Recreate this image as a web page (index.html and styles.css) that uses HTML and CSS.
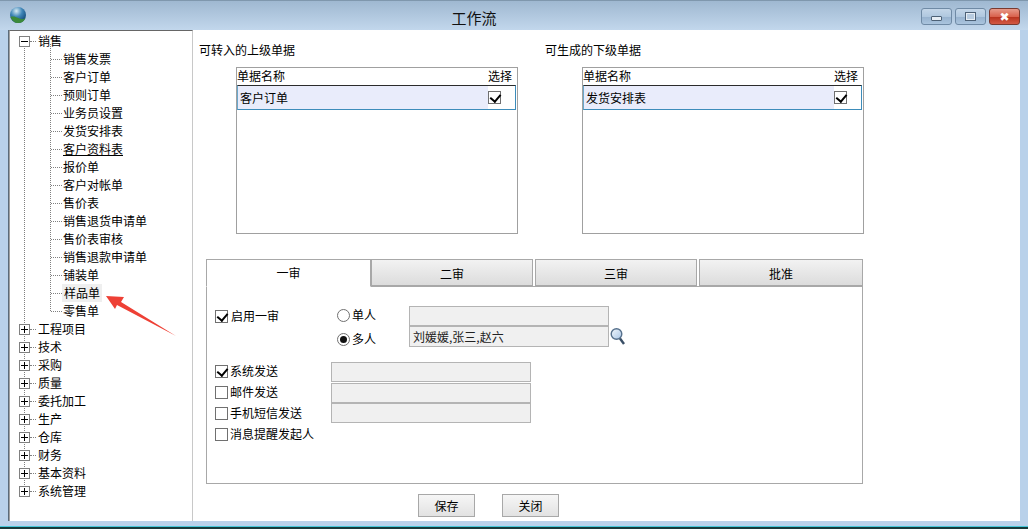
FILE: index.html
```html
<!DOCTYPE html>
<html lang="zh-CN">
<head>
<meta charset="utf-8">
<title>工作流</title>
<link rel="stylesheet" href="styles.css">
</head>
<body>
<div class="window">
  <header class="titlebar">
    <svg class="logo" width="18" height="18" viewBox="0 0 18 18"><defs><radialGradient id="g" cx="0.4" cy="0.25" r="0.8"><stop offset="0" stop-color="#d8ecf5"/><stop offset="0.45" stop-color="#3f86b8"/><stop offset="1" stop-color="#0d3f6e"/></radialGradient></defs><circle cx="9" cy="9" r="8" fill="url(#g)"/><path d="M1.5 11c2 4 4 6 8 6 3 0 6-2 7-5-3 2-5 1-7 0-3-1-5-2-8-1z" fill="#3c8a3a"/></svg>
    <div class="title">工作流</div>
    <div class="controls">
      <div class="ctl"><span class="min-glyph"></span></div>
      <div class="ctl"><span class="max-glyph"></span></div>
      <div class="ctl close"><span class="x-glyph">✖</span></div>
    </div>
  </header>
  <div class="client">
    <nav class="tree">
      <div class="node open"><span class="box minus"></span><span class="label">销售</span></div>
      <ul class="children">
        <li>销售发票</li><li>客户订单</li><li>预则订单</li><li>业务员设置</li><li>发货安排表</li>
        <li><u>客户资料表</u></li><li>报价单</li><li>客户对帐单</li><li>售价表</li><li>销售退货申请单</li>
        <li>售价表审核</li><li>销售退款申请单</li><li>铺装单</li><li><span class="hover">样品单</span></li><li>零售单</li>
      </ul>
      <div class="node"><span class="box"></span><span class="label">工程项目</span></div>
      <div class="node"><span class="box"></span><span class="label">技术</span></div>
      <div class="node"><span class="box"></span><span class="label">采购</span></div>
      <div class="node"><span class="box"></span><span class="label">质量</span></div>
      <div class="node"><span class="box"></span><span class="label">委托加工</span></div>
      <div class="node"><span class="box"></span><span class="label">生产</span></div>
      <div class="node"><span class="box"></span><span class="label">仓库</span></div>
      <div class="node"><span class="box"></span><span class="label">财务</span></div>
      <div class="node"><span class="box"></span><span class="label">基本资料</span></div>
      <div class="node last"><span class="box"></span><span class="label">系统管理</span></div>
      <svg class="arrow" width="72" height="43" viewBox="0 0 72 43"><path d="M0 1 18 2 15 7 70 41 11 10 9 14z" fill="#ee4035"/></svg>
    </nav>
    <main class="main">
      <section class="lists">
        <div class="col">
          <div class="col-title">可转入的上级单据</div>
          <div class="grid">
            <div class="grid-head"><span>单据名称</span><span>选择</span></div>
            <div class="grid-row"><span class="cell">客户订单</span><span class="cell-check"><span class="check on"></span></span></div>
          </div>
        </div>
        <div class="col">
          <div class="col-title">可生成的下级单据</div>
          <div class="grid">
            <div class="grid-head"><span>单据名称</span><span>选择</span></div>
            <div class="grid-row"><span class="cell">发货安排表</span><span class="cell-check"><span class="check on"></span></span></div>
          </div>
        </div>
      </section>
      <section class="tabs">
        <div class="tabbar">
          <div class="tab active">一审</div>
          <div class="tab">二审</div>
          <div class="tab">三审</div>
          <div class="tab">批准</div>
        </div>
        <div class="panel">
          <div class="approver">
            <label class="opt w-enable"><span class="check on"></span>启用一审</label>
            <div class="radios">
              <label class="opt"><span class="radio"></span>单人</label>
              <label class="opt"><span class="radio on"></span>多人</label>
            </div>
            <div class="fields">
              <div class="field"></div>
              <div class="field-row">
                <div class="field"><span class="names">刘媛媛,张三,赵六</span></div>
                <svg class="search" width="16" height="20" viewBox="0 0 16 20"><defs><linearGradient id="lens" x1="0" y1="0" x2="1" y2="1"><stop offset="0" stop-color="#f2f7fc"/><stop offset="1" stop-color="#a9c6e6"/></linearGradient></defs><circle cx="6.5" cy="7" r="5.3" fill="url(#lens)" stroke="#56708c" stroke-width="1.4"/><path d="M10 11.5 14 17" stroke="#3a4f66" stroke-width="2.4"/></svg>
              </div>
            </div>
          </div>
          <div class="sends">
            <div class="send-opts">
              <label class="opt"><span class="check on"></span>系统发送</label>
              <label class="opt"><span class="check"></span>邮件发送</label>
              <label class="opt"><span class="check"></span>手机短信发送</label>
              <label class="opt"><span class="check"></span>消息提醒发起人</label>
            </div>
            <div class="send-fields">
              <div class="field"></div>
              <div class="field"></div>
              <div class="field"></div>
            </div>
          </div>
        </div>
      </section>
      <footer class="actions">
        <button class="btn">保存</button>
        <button class="btn">关闭</button>
      </footer>
    </main>
  </div>
  <div class="edge"></div>
</div>
</body>
</html>
```
FILE: styles.css
```css
* { box-sizing: border-box; }
html, body { margin: 0; padding: 0; }
body {
  width: 1028px;
  height: 529px;
  overflow: hidden;
  font-family: "Noto Sans CJK SC", "Liberation Sans", sans-serif;
  font-size: 12px;
  color: #000;
  background: #fff;
}
.window {
  width: 1028px;
  height: 529px;
  display: flex;
  flex-direction: column;
  background: #b9d1ea;
}
.titlebar {
  height: 30px;
  flex: none;
  position: relative;
  display: flex;
  align-items: center;
  padding: 0 8px 2px 9px;
  background: linear-gradient(#9fb8d1, #c2d7ec);
  border-top: 1px solid #7f97ad;
}
.logo { flex: none; margin-top: 1px; }
.title {
  flex: 1;
  text-align: center;
  font-size: 15px;
  line-height: 20px;
  margin-top: 6px;
  color: #111;
}
.controls { display: flex; gap: 3px; flex: none; margin-top: 4px; }
.ctl {
  width: 31px;
  height: 17px;
  display: flex;
  align-items: center;
  justify-content: center;
  border: 1px solid #6f8aa5;
  border-radius: 3px;
  background: linear-gradient(#c4d6e8, #b0c8df 50%, #98b3cf 55%, #aac4de);
}
.close {
  border-color: #7a3a30;
  background: linear-gradient(#e79a8a, #d9634e 50%, #b9341f 55%, #d35a45);
}
.min-glyph { width: 11px; height: 5px; background: #e6edf4; border: 1px solid #4d6176; border-radius: 1px; margin-top: 3px; }
.max-glyph { width: 11px; height: 9px; border: 2px solid #e6edf4; outline: 1px solid #4d6176; outline-offset: -1px; background: #b8cce0; }
.x-glyph { color: #fff; font-size: 12px; line-height: 12px; font-family: "DejaVu Sans", sans-serif; }

.client {
  flex: none;
  height: 491px;
  margin: 0 8px 0 8px;
  display: flex;
  background: #fff;
  border-left: 1px solid #5b6b7a;
}
.tree {
  flex: none;
  position: relative;
  width: 184px;
  padding: 1px 0 0 9px;
  border-right: 1px solid #c8c8c8;
  border-left: 1px solid #a0a0a0;
  border-top: 1px solid #666;
  background: #fff;
}
.tree::before {
  content: "";
  position: absolute;
  left: 14px;
  top: 11px;
  height: 445px;
  border-left: 1px dotted #808080;
}
.node {
  position: relative;
  display: flex;
  align-items: center;
  height: 18px;
}
.box {
  position: relative;
  z-index: 1;
  flex: none;
  width: 11px;
  height: 11px;
  background: #fff;
  border: 1px solid #808080;
}
.box::before {
  content: "";
  position: absolute;
  left: 1px;
  top: 4px;
  width: 7px;
  height: 1px;
  background: #000;
}
.box::after {
  content: "";
  position: absolute;
  left: 4px;
  top: 1px;
  width: 1px;
  height: 7px;
  background: #000;
}
.box.minus::after { display: none; }
.label {
  margin-left: 8px;
  position: relative;
  line-height: 18px;
}
.label::before {
  content: "";
  position: absolute;
  left: -8px;
  top: 9px;
  width: 6px;
  border-top: 1px dotted #808080;
}
.children {
  list-style: none;
  margin: 0;
  padding: 0 0 0 32px;
  position: relative;
}
.children::before {
  content: "";
  position: absolute;
  left: 31px;
  top: -6px;
  bottom: 9px;
  border-left: 1px dotted #808080;
}
.children li {
  position: relative;
  height: 18px;
  line-height: 18px;
  padding-left: 12px;
  white-space: nowrap;
}
.children li::before {
  content: "";
  position: absolute;
  left: 0;
  top: 9px;
  width: 11px;
  border-top: 1px dotted #808080;
}
.hover { display: inline-block; background: #efefef; padding: 0 2px; margin-left: -1px; }
.arrow { position: absolute; left: 96px; top: 264px; }

.main {
  flex: 1;
  display: flex;
  flex-direction: column;
  padding: 11px 0 0 7px;
  background: #fff;
}
.lists { display: flex; height: 218px; }
.col { width: 346px; flex: none; }
.col-title { line-height: 18px; height: 26px; margin-left: -1px; }
.grid {
  margin-left: 36px;
  width: 282px;
  height: 167px;
  border: 1px solid #a0a0a0;
  background: #fff;
}
.grid-head {
  display: flex;
  justify-content: space-between;
  height: 17px;
  line-height: 15px;
  padding-right: 5px;
  background: #fff;
}
.grid-row {
  display: flex;
  height: 25px;
  margin-right: 1px;
  border: 1px solid #3d8cba;
  border-top-color: #2b2b2b;
  border-left-color: #6aa8cc;
  background: #e9ecfb;
}
.cell { flex: 1; line-height: 24px; padding-left: 2px; }
.cell-check { width: 27px; background: #fff; display: flex; align-items: center; justify-content: flex-start; }
.check {
  position: relative;
  display: inline-block;
  flex: none;
  width: 13px;
  height: 13px;
  border: 1px solid #707070;
  background: #fff;
}
.check.on::after {
  content: "";
  position: absolute;
  left: 3px;
  top: 0;
  width: 5px;
  height: 8px;
  border-right: 2px solid #000;
  border-bottom: 2px solid #000;
  transform: rotate(40deg);
}
.tabs { margin-left: 6px; width: 657px; }
.tabbar { display: flex; height: 27px; gap: 2px; position: relative; z-index: 1; }
.tab {
  width: 162px;
  height: 27px;
  text-align: center;
  line-height: 28px;
  border: 1px solid #a8a8a8;
  background: linear-gradient(#f2f2f2, #dcdcdc);
}
.tab.active {
  width: 165px;
  margin-right: -2px;
  background: #fff;
  border-bottom-color: #fff;
  height: 28px;
  line-height: 26px;
}
.tab:last-child { width: 164px; }
.panel {
  height: 198px;
  border: 1px solid #a8a8a8;
  padding: 19px 0 0 8px;
  background: #fff;
}
.approver { display: flex; align-items: flex-start; }
.opt { display: flex; align-items: center; height: 20px; line-height: 20px; gap: 3px; white-space: nowrap; }
.w-enable { width: 122px; }
.radios { width: 72px; margin-top: -1px; }
.radios .opt { height: 20px; gap: 2px; }
.radios .opt + .opt { margin-top: 4px; }
.radio {
  position: relative;
  display: inline-block;
  width: 13px;
  height: 13px;
  border: 1px solid #707070;
  border-radius: 50%;
  background: #fff;
}
.radio.on::after {
  content: "";
  position: absolute;
  left: 2px;
  top: 2px;
  width: 7px;
  height: 7px;
  border-radius: 50%;
  background: #111;
}
.fields { width: 217px; }
.field {
  width: 200px;
  height: 21px;
  border: 1px solid #b4b4b4;
  background: #f0f0f0;
  line-height: 20px;
  overflow: hidden;
}
.fields > .field { height: 20px; }
.field-row { display: flex; align-items: center; gap: 1px; }
.names { display: block; padding-left: 3px; color: #222; }
.search { flex: none; }
.sends { display: flex; margin-top: 12px; }
.send-opts { width: 116px; }
.send-opts .opt { height: 20px; gap: 2px; }
.send-opts .opt + .opt { margin-top: 1px; }
.send-fields { display: flex; flex-direction: column; gap: 0.5px; margin-top: 1px; }
.send-fields .field { height: 20px; }
.actions { display: flex; gap: 27px; padding: 10px 0 0 225px; margin-left: -7px; }
.btn {
  width: 57px;
  height: 23px;
  padding: 0;
  font: inherit;
  color: #000;
  border: 1px solid #a8a8a8;
  border-radius: 0;
  background: linear-gradient(#f6f6f6, #e2e2e2);
}
.edge {
  flex: none;
  height: 8px;
  background: #b9d1ea;
  border-bottom: 2px solid #163a3a;
  box-shadow: inset 0 -1px 0 #45c6d8;
}
```
